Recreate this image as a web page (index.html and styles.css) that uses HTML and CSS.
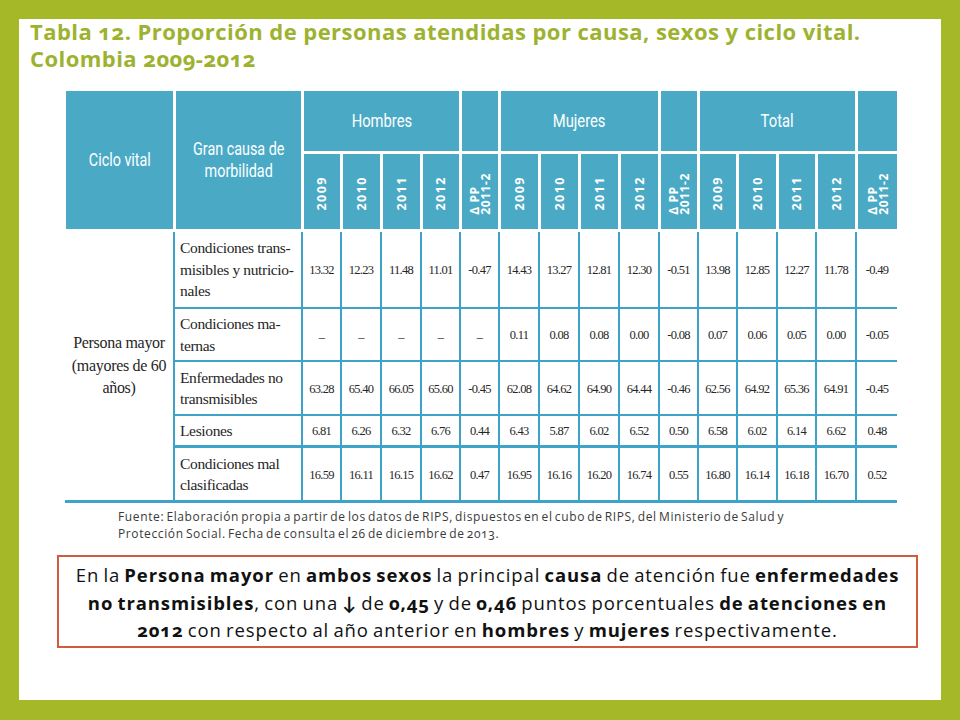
FILE: index.html
```html
<!DOCTYPE html>
<html lang="es">
<head>
<meta charset="utf-8">
<title>Tabla 12</title>
<link rel="stylesheet" href="styles.css">
</head>
<body>
<div class="slide">
  <h1 class="title">Tabla 12. Proporción de personas atendidas por causa, sexos y ciclo vital.<br>Colombia 2009-2012</h1>

  <div class="tbl">
    <div class="hd hd-tall"><span class="cond">Ciclo vital</span></div>
    <div class="hd hd-tall"><span class="cond">Gran causa de<br>morbilidad</span></div>
    <div class="hd hd-group"><span class="cond">Hombres</span></div>
    <div class="hd"></div>
    <div class="hd hd-group"><span class="cond">Mujeres</span></div>
    <div class="hd"></div>
    <div class="hd hd-group"><span class="cond">Total</span></div>
    <div class="hd hd-last"></div>

    <div class="hd hd-year"><span>2009</span></div>
    <div class="hd hd-year"><span>2010</span></div>
    <div class="hd hd-year"><span>2011</span></div>
    <div class="hd hd-year"><span>2012</span></div>
    <div class="hd hd-year hd-delta"><span>Δ PP<br>2011-2</span></div>
    <div class="hd hd-year"><span>2009</span></div>
    <div class="hd hd-year"><span>2010</span></div>
    <div class="hd hd-year"><span>2011</span></div>
    <div class="hd hd-year"><span>2012</span></div>
    <div class="hd hd-year hd-delta"><span>Δ PP<br>2011-2</span></div>
    <div class="hd hd-year"><span>2009</span></div>
    <div class="hd hd-year"><span>2010</span></div>
    <div class="hd hd-year"><span>2011</span></div>
    <div class="hd hd-year"><span>2012</span></div>
    <div class="hd hd-year hd-delta hd-last"><span>Δ PP<br>2011-2</span></div>

    <div class="cycle">Persona mayor<br>(mayores de 60<br>años)</div>

    <div class="cause">Condiciones trans-<br>misibles y nutricio-<br>nales</div>
    <div class="num">13.32</div><div class="num">12.23</div><div class="num">11.48</div><div class="num">11.01</div><div class="num">-0.47</div>
    <div class="num">14.43</div><div class="num">13.27</div><div class="num">12.81</div><div class="num">12.30</div><div class="num">-0.51</div>
    <div class="num">13.98</div><div class="num">12.85</div><div class="num">12.27</div><div class="num">11.78</div><div class="num last">-0.49</div>

    <div class="cause">Condiciones ma-<br>ternas</div>
    <div class="num dash">–</div><div class="num dash">–</div><div class="num dash">–</div><div class="num dash">–</div><div class="num dash">–</div>
    <div class="num">0.11</div><div class="num">0.08</div><div class="num">0.08</div><div class="num">0.00</div><div class="num">-0.08</div>
    <div class="num">0.07</div><div class="num">0.06</div><div class="num">0.05</div><div class="num">0.00</div><div class="num last">-0.05</div>

    <div class="cause">Enfermedades no<br>transmisibles</div>
    <div class="num">63.28</div><div class="num">65.40</div><div class="num">66.05</div><div class="num">65.60</div><div class="num">-0.45</div>
    <div class="num">62.08</div><div class="num">64.62</div><div class="num">64.90</div><div class="num">64.44</div><div class="num">-0.46</div>
    <div class="num">62.56</div><div class="num">64.92</div><div class="num">65.36</div><div class="num">64.91</div><div class="num last">-0.45</div>

    <div class="cause thick">Lesiones</div>
    <div class="num thick">6.81</div><div class="num thick">6.26</div><div class="num thick">6.32</div><div class="num thick">6.76</div><div class="num thick">0.44</div>
    <div class="num thick">6.43</div><div class="num thick">5.87</div><div class="num thick">6.02</div><div class="num thick">6.52</div><div class="num thick">0.50</div>
    <div class="num thick">6.58</div><div class="num thick">6.02</div><div class="num thick">6.14</div><div class="num thick">6.62</div><div class="num thick last">0.48</div>

    <div class="cause thick">Condiciones mal<br>clasificadas</div>
    <div class="num thick">16.59</div><div class="num thick">16.11</div><div class="num thick">16.15</div><div class="num thick">16.62</div><div class="num thick">0.47</div>
    <div class="num thick">16.95</div><div class="num thick">16.16</div><div class="num thick">16.20</div><div class="num thick">16.74</div><div class="num thick">0.55</div>
    <div class="num thick">16.80</div><div class="num thick">16.14</div><div class="num thick">16.18</div><div class="num thick">16.70</div><div class="num thick last">0.52</div>
  </div>

  <p class="source">Fuente: Elaboración propia a partir de los datos de RIPS, dispuestos en el cubo de RIPS, del Ministerio de Salud y<br>Protección Social. Fecha de consulta el 26 de diciembre de 2013.</p>

  <div class="note">En la <b>Persona mayor</b> en <b>ambos sexos</b> la principal <b>causa</b> de atención fue <b>enfermedades</b><br><b>no transmisibles</b>, con una <b>↓</b> de <b>0,45</b> y de <b>0,46</b> puntos porcentuales <b>de atenciones en</b><br><b>2012</b> con respecto al año anterior en <b>hombres</b> y <b>mujeres</b> respectivamente.</div>
</div>
</body>
</html>
```

FILE: styles.css
```css
html, body {
  margin: 0;
  padding: 0;
}

body {
  width: 960px;
  height: 720px;
  overflow: hidden;
  background: #a5b828;
}

.slide {
  display: flow-root;
  box-sizing: border-box;
  margin: 19px 19px 0;
  width: 922px;
  height: 681px;
  padding: 0 0 0 11px;
  background: #ffffff;
}

.title {
  margin: -1px 0 0;
  font-family: "Open Sans", Lato, sans-serif;
  font-weight: 700;
  font-size: 22px;
  line-height: 27px;
  letter-spacing: 0.45px;
  color: #9db330;
  font-variant-numeric: oldstyle-nums;
}

/* ---------- table ---------- */
.tbl {
  display: grid;
  margin: 19px 0 0 35px;
  width: 832px;
  grid-template-columns: 110px 128px 39px 40px 40px 39px 39px 40px 40px 40px 40px 39px 39px 40px 39px 40px 40px;
  grid-template-rows: 63px 78px 77px 53px 54px 32px 55px;
}

.hd {
  box-sizing: border-box;
  background: #4aaac6;
  border: solid #ffffff;
  border-width: 0 2px 3px 1px;
  color: #ffffff;
  display: flex;
  align-items: center;
  justify-content: center;
  text-align: center;
}

.hd .cond {
  display: inline-block;
  font-family: Roboto, "Liberation Sans", sans-serif;
  font-size: 17.5px;
  line-height: 22px;
  white-space: nowrap;
  transform: scaleX(0.82);
}

.hd-last {
  border-right-width: 0;
}

.hd-tall {
  grid-row: span 2;
}

.hd-group {
  grid-column: span 4;
}

.hd-group .cond {
  font-size: 18px;
}

.hd-year span {
  writing-mode: vertical-rl;
  transform: rotate(180deg);
  font-family: "Open Sans", "DejaVu Sans", sans-serif;
  font-weight: 700;
  font-size: 12.5px;
  line-height: 12px;
  letter-spacing: 1.5px;
  margin-top: 4px;
}

.hd-delta span {
  font-size: 12px;
  line-height: 11px;
  letter-spacing: 0.6px;
  text-align: left;
}

.cycle {
  grid-row: span 5;
  box-sizing: border-box;
  border-right: 2px solid #3ea3c8;
  border-bottom: 3px solid #3ea3c8;
  display: flex;
  align-items: center;
  justify-content: center;
  text-align: center;
  font-family: "Liberation Serif", serif;
  font-size: 16px;
  line-height: 22.5px;
  letter-spacing: -0.3px;
  color: #262626;
}

.cause,
.num {
  box-sizing: border-box;
  border-right: 2px solid #3ea3c8;
  border-bottom: 2px solid #3ea3c8;
  display: flex;
  align-items: center;
  font-family: "Liberation Serif", serif;
  color: #262626;
}

.cause {
  padding-left: 5px;
  font-size: 15.5px;
  line-height: 21.5px;
  letter-spacing: -0.35px;
}

.num {
  justify-content: center;
  font-size: 12.5px;
  letter-spacing: -0.7px;
  padding-top: 2px;
}

.num.dash {
  padding-top: 6px;
}

.num.last {
  border-right-width: 0;
}

.thick {
  border-bottom-width: 3px;
}

/* ---------- source ---------- */
.source {
  margin: 5px 0 0 88px;
  font-family: "Open Sans", Lato, sans-serif;
  font-size: 12px;
  line-height: 17px;
  letter-spacing: 0.62px;
  word-spacing: -1.5px;
  color: #3a3a3a;
  font-variant-numeric: oldstyle-nums;
}

/* ---------- note ---------- */
.note {
  box-sizing: border-box;
  margin: 13px 0 0 27px;
  width: 861px;
  height: 93px;
  padding: 4px 0 0;
  border: 2px solid #cf5d3b;
  text-align: center;
  white-space: nowrap;
  font-family: "Open Sans", Lato, sans-serif;
  font-size: 18.5px;
  line-height: 27.5px;
  letter-spacing: 0.9px;
  word-spacing: -1.5px;
  color: #111111;
  font-variant-numeric: oldstyle-nums;
}

.note b {
  font-weight: 700;
}
```
